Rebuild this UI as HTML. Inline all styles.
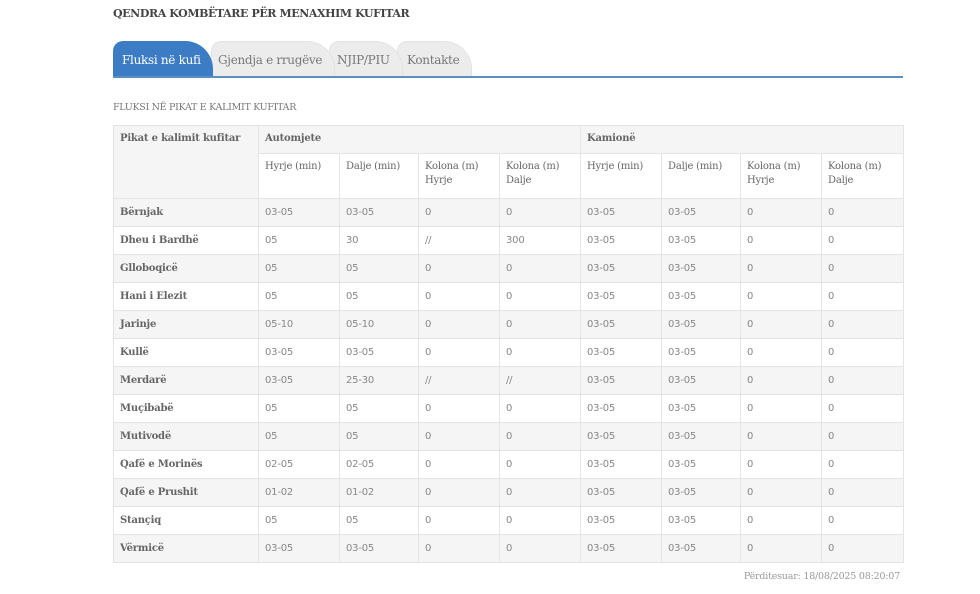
<!DOCTYPE html>
<html><head><meta charset="utf-8"><style>
body{margin:0;background:#fff;font-family:"DejaVu Serif","Liberation Serif",serif;color:#555;width:980px;height:594px;overflow:hidden;position:relative}
.t{position:absolute;left:113px;top:7px;font-size:11px;font-weight:bold;color:#444;letter-spacing:-0.4px}
.tabs{position:absolute;left:113px;top:41px;width:790px;height:35px;border-bottom:2px solid #5b8fc0}
.tab{position:absolute;top:0;height:35px;background:#ececec;border-radius:10px 28px 0 0;font-size:12px;color:#777;line-height:36px;padding-left:5px;box-sizing:border-box;border:1px solid #e2e2e2;border-bottom:none;letter-spacing:-0.3px;white-space:nowrap}
.tab.a{background:#3b7cc4;color:#fff;border-color:#3b7cc4}
.sub{position:absolute;left:113px;top:102px;font-size:9.5px;color:#777;letter-spacing:-0.3px}
table{position:absolute;left:113px;top:125px;width:790px;border-collapse:collapse;font-size:10px;table-layout:fixed}
td{border:1px solid #e4e4e4;padding:0 6px;vertical-align:top;color:#666;height:27.3px;line-height:27px;box-sizing:border-box;overflow:hidden;white-space:nowrap;letter-spacing:-0.2px}
tr.h td{line-height:14px;padding-top:6px;white-space:normal}
tr.g td{background:#f5f5f5}
td.n{font-weight:600;color:#666}
.v{font-family:"DejaVu Sans","Liberation Sans",sans-serif;color:#888;font-size:10px}
.up{position:absolute;right:80px;top:571px;font-size:9.5px;color:#999;letter-spacing:-0.2px}
</style></head><body>
<div class="t">QENDRA KOMBËTARE PËR MENAXHIM KUFITAR</div>
<div class="tabs">
<div class="tab" style="left:284px;width:75px;padding-left:9px">Kontakte</div>
<div class="tab" style="left:216px;width:74px;padding-left:7px">NJIP/PIU</div>
<div class="tab" style="left:98px;width:124px;padding-left:6px">Gjendja e rrugëve</div>
<div class="tab a" style="left:0;width:100px;padding-left:8px">Fluksi në kufi</div>
</div>
<div class="sub">FLUKSI NË PIKAT E KALIMIT KUFITAR</div>
<table>
<colgroup><col style="width:145px"><col style="width:81px"><col style="width:79px"><col style="width:81px"><col style="width:81px"><col style="width:81px"><col style="width:79px"><col style="width:81px"><col style="width:82px"></colgroup>
<tr class="g h"><td class="n" rowspan="2" style="background:#f5f5f5">Pikat e kalimit kufitar</td><td class="n" colspan="4" style="height:28px">Automjete</td><td class="n" colspan="4">Kamionë</td></tr>
<tr class="h"><td style="height:45px">Hyrje (min)</td><td>Dalje (min)</td><td>Kolona (m) Hyrje</td><td>Kolona (m) Dalje</td><td>Hyrje (min)</td><td>Dalje (min)</td><td>Kolona (m) Hyrje</td><td>Kolona (m) Dalje</td></tr>
<tr class="g"><td class="n">Bërnjak</td><td class="v">03-05</td><td class="v">03-05</td><td class="v">0</td><td class="v">0</td><td class="v">03-05</td><td class="v">03-05</td><td class="v">0</td><td class="v">0</td></tr>
<tr><td class="n">Dheu i Bardhë</td><td class="v">05</td><td class="v">30</td><td class="v">//</td><td class="v">300</td><td class="v">03-05</td><td class="v">03-05</td><td class="v">0</td><td class="v">0</td></tr>
<tr class="g"><td class="n">Glloboqicë</td><td class="v">05</td><td class="v">05</td><td class="v">0</td><td class="v">0</td><td class="v">03-05</td><td class="v">03-05</td><td class="v">0</td><td class="v">0</td></tr>
<tr><td class="n">Hani i Elezit</td><td class="v">05</td><td class="v">05</td><td class="v">0</td><td class="v">0</td><td class="v">03-05</td><td class="v">03-05</td><td class="v">0</td><td class="v">0</td></tr>
<tr class="g"><td class="n">Jarinje</td><td class="v">05-10</td><td class="v">05-10</td><td class="v">0</td><td class="v">0</td><td class="v">03-05</td><td class="v">03-05</td><td class="v">0</td><td class="v">0</td></tr>
<tr><td class="n">Kullë</td><td class="v">03-05</td><td class="v">03-05</td><td class="v">0</td><td class="v">0</td><td class="v">03-05</td><td class="v">03-05</td><td class="v">0</td><td class="v">0</td></tr>
<tr class="g"><td class="n">Merdarë</td><td class="v">03-05</td><td class="v">25-30</td><td class="v">//</td><td class="v">//</td><td class="v">03-05</td><td class="v">03-05</td><td class="v">0</td><td class="v">0</td></tr>
<tr><td class="n">Muçibabë</td><td class="v">05</td><td class="v">05</td><td class="v">0</td><td class="v">0</td><td class="v">03-05</td><td class="v">03-05</td><td class="v">0</td><td class="v">0</td></tr>
<tr class="g"><td class="n">Mutivodë</td><td class="v">05</td><td class="v">05</td><td class="v">0</td><td class="v">0</td><td class="v">03-05</td><td class="v">03-05</td><td class="v">0</td><td class="v">0</td></tr>
<tr><td class="n">Qafë e Morinës</td><td class="v">02-05</td><td class="v">02-05</td><td class="v">0</td><td class="v">0</td><td class="v">03-05</td><td class="v">03-05</td><td class="v">0</td><td class="v">0</td></tr>
<tr class="g"><td class="n">Qafë e Prushit</td><td class="v">01-02</td><td class="v">01-02</td><td class="v">0</td><td class="v">0</td><td class="v">03-05</td><td class="v">03-05</td><td class="v">0</td><td class="v">0</td></tr>
<tr><td class="n">Stançiq</td><td class="v">05</td><td class="v">05</td><td class="v">0</td><td class="v">0</td><td class="v">03-05</td><td class="v">03-05</td><td class="v">0</td><td class="v">0</td></tr>
<tr class="g"><td class="n">Vërmicë</td><td class="v">03-05</td><td class="v">03-05</td><td class="v">0</td><td class="v">0</td><td class="v">03-05</td><td class="v">03-05</td><td class="v">0</td><td class="v">0</td></tr>
</table>
<div class="up">Përditesuar: 18/08/2025 08:20:07</div>
</body></html>
